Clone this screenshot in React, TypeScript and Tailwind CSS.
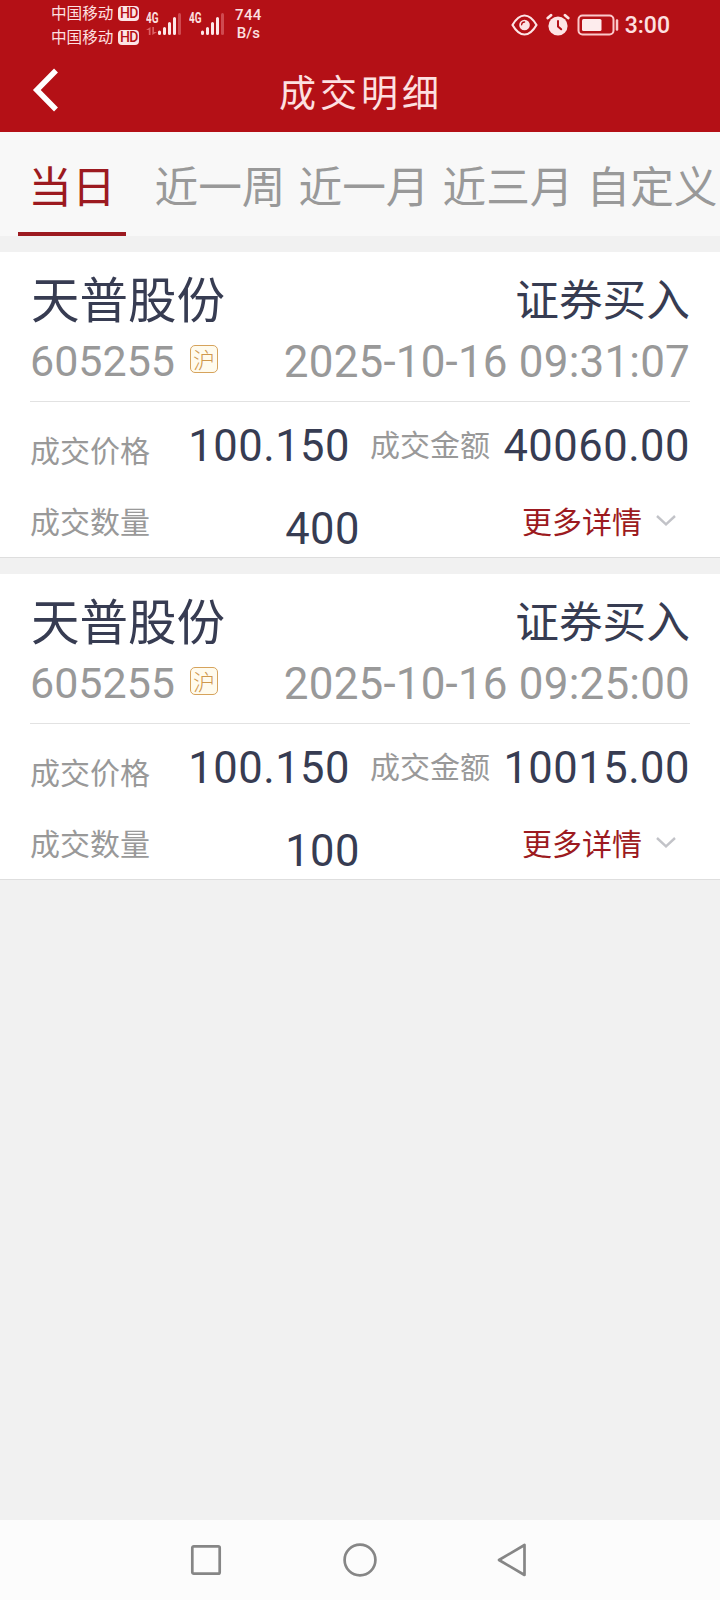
const cjk = "font-['Noto_Sans_CJK_SC',sans-serif]";
const num = "font-['Roboto',sans-serif]";

function Carrier() {
  return (
    <div className="flex h-6 items-center gap-[5px]">
      <span className={`${cjk} pb-[2px] text-[15.6px] leading-[22px] text-[#fde0e1]`}>中国移动</span>
      <span className={`${num} flex h-[15px] w-[21px] items-center justify-center rounded-[4px] bg-[#fde4e5] text-[14px] font-medium leading-none tracking-[-0.6px] text-[#b41016]`}>HD</span>
    </div>
  );
}

function Signal({ arrows }: { arrows?: boolean }) {
  return (
    <svg width="38" height="26" viewBox="0 0 38 26" className="shrink-0">
      <text x="0" y="12" fontFamily="Roboto" fontWeight="700" fontSize="14" textLength="12.5" lengthAdjust="spacingAndGlyphs" fill="#fde0e1">4G</text>
      {arrows && (
        <g fill="#db5f64">
          <path d="M4.500 16v8H2.800v-5H0z" />
          <path d="M6.300 16H8v5h3l-4.700 3z" />
        </g>
      )}
      <g stroke="#fde8e9" strokeWidth="3" strokeLinecap="round">
        <path d="M13.500 21v1.500M18.500 17.500v5M23.500 12.500v10M28.500 7.500v15" />
        <path d="M33.500 3.500v19" stroke="#cf4a50" />
      </g>
    </svg>
  );
}

function StatusBar() {
  return (
    <div className="flex h-[50px] items-start pl-[51px] pr-[50px]">
      <div className="flex flex-col pt-px">
        <Carrier />
        <Carrier />
      </div>
      <div className="ml-[7px] flex gap-[5px] pt-[11px]">
        <Signal arrows />
        <Signal />
      </div>
      <div className={`${num} ml-[6px] flex w-[30px] flex-col items-center pt-[6px] text-[15px] font-medium leading-[18px] text-[#fde0e1]`}>
        <span className="tracking-[0.4px]">744</span>
        <span>B/s</span>
      </div>
      <div className="ml-auto flex h-[50px] items-center">
        <svg width="27" height="22" viewBox="0 0 27 22" fill="none" stroke="#fde4e5">
          <path d="M1.500 11Q7 1.500 13.500 1.500T25.500 11Q20 20.500 13.500 20.500T1.500 11z" strokeWidth="2.200" strokeLinejoin="round" />
          <circle cx="13.500" cy="11" r="5.300" fill="#fde4e5" stroke="none" />
          <path d="M10.600 10.800a3 3 0 0 1 3-2.800" stroke="#b41016" strokeWidth="1.300" strokeLinecap="round" />
        </svg>
        <svg width="24" height="24" viewBox="0 0 24 24" className="ml-2" fill="none" stroke="#fde4e5" strokeLinecap="round">
          <circle cx="12" cy="13" r="9.600" fill="#fde4e5" stroke="none" />
          <path d="M1.800 5 5 2.200M22.200 5 19 2.200" strokeWidth="2.800" />
          <path d="M12 8v5.500l3.200 2.800" stroke="#b41016" strokeWidth="2" />
        </svg>
        <svg width="42" height="24" viewBox="0 0 42 24" className="ml-[7px]" fill="none">
          <rect x="1.500" y="2.500" width="35" height="19" rx="4" stroke="#fbc9cb" strokeWidth="2" />
          <rect x="5" y="6" width="19.500" height="12" rx="1.500" fill="#fdeced" />
          <path d="M40 7.500v9" stroke="#fbc9cb" strokeWidth="2.500" strokeLinecap="round" />
        </svg>
        <span className={`${num} ml-[6px] pt-[2px] text-[23px] font-medium leading-6 text-[#fde0e1]`}>3:00</span>
      </div>
    </div>
  );
}

function Header() {
  return (
    <header className="h-[132px] bg-[#b41016]">
      <StatusBar />
      <div className="flex h-[82px] items-center">
        <button className="flex w-20 pb-[2px] pl-[32px]" aria-label="返回">
          <svg width="28" height="44" viewBox="0 0 28 44" fill="none">
            <path d="M24 2.500 4.800 22 24 41.500" stroke="#fff" strokeWidth="5.500" />
          </svg>
        </button>
        <h1 className={`${cjk} flex-1 pl-[2px] text-center text-[37px] leading-[82px] tracking-[4px] text-[#fde0e1]`}>成交明细</h1>
        <div className="w-20" />
      </div>
    </header>
  );
}

function Tabs() {
  return (
    <nav className={`${cjk} flex h-[104px] w-full overflow-hidden bg-[#f8f8f8] text-[43.7px] text-[#999]`}>
      <div className="flex w-[148px] shrink-0 flex-col pl-[18px]">
        <span className="h-[100px] w-[108px] text-center leading-[104px] text-[#9c1a20]">当日</span>
        <span className="h-1 w-[108px] bg-[#9c1a20]" />
      </div>
      {["近一周", "近一月", "近三月", "自定义"].map((t) => (
        <span key={t} className="w-[144px] shrink-0 text-center leading-[104px]">{t}</span>
      ))}
    </nav>
  );
}

type Deal = { time: string; amount: string; qty: string };

function DealCard({ time, amount, qty }: Deal) {
  return (
    <section className="h-[306px] border-b border-[#dedede] bg-white px-[30px]">
      <div className={`${cjk} flex h-[88px] items-center justify-between text-[#373c52]`}>
        <span className="pl-px pt-px text-[48.5px] leading-[90px]">天普股份</span>
        <span className="pt-px text-[43.7px] leading-[90px]">证券买入</span>
      </div>
      <div className={`${num} flex h-[61px] justify-between text-[#999]`}>
        <div className="flex">
          <span className="text-[43px] leading-[43px]">605255</span>
          <span className={`${cjk} ml-[15px] mt-[5px] flex h-[28px] w-[28px] items-center justify-center rounded-[5px] border border-[#d6a35c] bg-[#fffbee] pb-[2px] text-[22px] font-light leading-none text-[#cf984c]`}>沪</span>
        </div>
        <span className="text-[44px] leading-[45px] tracking-[0.18px]">{time}</span>
      </div>
      <div className="h-px bg-[#e2e2e2]" />
      <div className="flex h-[81px] leading-[83px]">
        <span className={`${cjk} w-[120px] pt-[6px] text-[30px] text-[#999]`}>成交价格</span>
        <span className={`${num} w-[200px] pt-[3px] text-right text-[43.5px] tracking-[0.5px] text-[#373c52]`}>100.150</span>
        <span className={`${cjk} ml-[20px] w-[120px] text-[30px] text-[#999]`}>成交金额</span>
        <span className={`${num} ml-auto pt-[3px] text-[43.5px] tracking-[0.5px] text-[#373c52]`}>{amount}</span>
      </div>
      <div className="flex h-[74px] leading-[74px]">
        <span className={`${cjk} w-[120px] text-[30px] text-[#999]`}>成交数量</span>
        <span className={`${num} w-[210px] pt-[10px] text-right text-[43.5px] tracking-[0.5px] text-[#373c52]`}>{qty}</span>
        <button className="ml-auto flex h-[74px] pr-[14px]">
          <span className={`${cjk} text-[30px] leading-[74px] text-[#9c1a20]`}>更多详情</span>
          <svg width="20" height="11" viewBox="0 0 20 11" className="ml-[14px] mt-[32px]" fill="none">
            <path d="M1 1 10 9.300 19 1" stroke="#c2c3c8" strokeWidth="2.400" />
          </svg>
        </button>
      </div>
    </section>
  );
}

const deals: Deal[] = [
  { time: "2025-10-16 09:31:07", amount: "40060.00", qty: "400" },
  { time: "2025-10-16 09:25:00", amount: "10015.00", qty: "100" },
];

function NavBar() {
  return (
    <footer className="flex h-20 items-center bg-[#fcfcfc] pl-[190px]">
      <svg width="32" height="32" viewBox="0 0 32 32" fill="none" stroke="#868686" strokeWidth="2.700">
        <rect x="2.300" y="2.300" width="27.400" height="27.400" rx="1.500" />
      </svg>
      <svg width="34" height="34" viewBox="0 0 34 34" fill="none" stroke="#868686" strokeWidth="2.700" className="ml-[121px]">
        <circle cx="17" cy="17" r="15.400" />
      </svg>
      <svg width="32" height="34" viewBox="0 0 32 34" fill="none" stroke="#868686" strokeWidth="2.700" strokeLinejoin="round" className="ml-[119px]">
        <path d="M28.500 2v30L3 17z" />
      </svg>
    </footer>
  );
}

export default function App() {
  return (
    <div className="flex h-[1600px] w-[720px] flex-col overflow-hidden bg-[#f1f1f1]">
      <Header />
      <Tabs />
      <main className="flex flex-1 flex-col gap-4 pt-4">
        {deals.map((d) => (
          <DealCard key={d.time} {...d} />
        ))}
      </main>
      <NavBar />
    </div>
  );
}
